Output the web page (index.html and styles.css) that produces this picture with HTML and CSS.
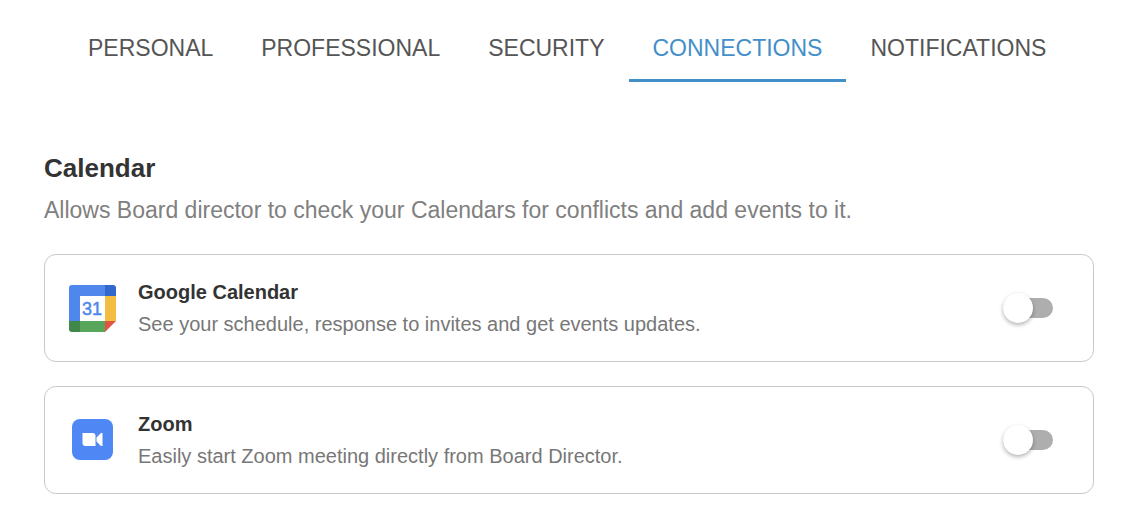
FILE: index.html
```html
<!DOCTYPE html>
<html lang="en">
<head>
<meta charset="utf-8">
<title>Connections</title>
<link rel="stylesheet" href="styles.css">
</head>
<body>
<nav class="tabs" aria-label="Profile settings">
  <a class="tab" href="#personal">PERSONAL</a>
  <a class="tab" href="#professional">PROFESSIONAL</a>
  <a class="tab" href="#security">SECURITY</a>
  <a class="tab tab-active" href="#connections" aria-current="page">CONNECTIONS</a>
  <a class="tab" href="#notifications">NOTIFICATIONS</a>
</nav>
<main class="content">
  <h1 class="heading">Calendar</h1>
  <p class="intro">Allows Board director to check your Calendars for conflicts and add events to it.</p>
  <div class="cards">
    <section class="card">
      <svg class="logo" viewBox="0 0 48 48" aria-hidden="true">
        <path fill="#4f87ed" d="M4 1h33v11H12v25H1V4a3 3 0 0 1 3-3z"/>
        <path fill="#3068cb" d="M37 1h8a3 3 0 0 1 3 3v8H37z"/>
        <path fill="#f2bd42" d="M37 12h11v25H37z"/>
        <path fill="#58a65c" d="M12 37h25v11H12z"/>
        <path fill="#3f8849" d="M1 37h11v11H4a3 3 0 0 1-3-3z"/>
        <path fill="#e15441" d="M37 37h11L37 48z"/>
        <path fill="#fff" d="M12 12h25v25H12z"/>
        <text class="logo-day" x="24" y="31" text-anchor="middle">31</text>
      </svg>
      <div class="details">
        <h2 class="name" id="google-name">Google Calendar</h2>
        <p class="description">See your schedule, response to invites and get events updates.</p>
      </div>
      <input class="switch" type="checkbox" role="switch" aria-labelledby="google-name">
    </section>
    <section class="card">
      <svg class="logo" viewBox="0 0 48 48" aria-hidden="true">
        <rect x="4" y="3" width="41" height="41" rx="8" fill="#4f88f5"/>
        <path fill="#fff" d="M14 17h10.500a3 3 0 0 1 3 3v10H17.500a3 3 0 0 1-3-3V17zM34.500 17v13h-1.500l-4.500-4.500v-4L33 17z"/>
      </svg>
      <div class="details">
        <h2 class="name" id="zoom-name">Zoom</h2>
        <p class="description">Easily start Zoom meeting directly from Board Director.</p>
      </div>
      <input class="switch" type="checkbox" role="switch" aria-labelledby="zoom-name">
    </section>
  </div>
</main>
</body>
</html>
```
FILE: styles.css
```css
* {
  box-sizing: border-box;
}

body {
  margin: 0;
  background: #fff;
  color: #333;
  font-family: "Liberation Sans", Arial, sans-serif;
}

.tabs {
  display: flex;
  padding: 14px 64px 0;
}

.tab {
  padding: 20px 24px 17px;
  border-bottom: 3px solid transparent;
  color: #555;
  font-size: 23px;
  line-height: 28px;
  text-decoration: none;
}

.tab-active {
  border-color: #438fc9;
  color: #438fc9;
}

.content {
  padding: 70px 38px 28px 44px;
}

.heading {
  margin: 0;
  font-size: 26px;
  line-height: 32px;
}

.intro {
  margin: 12px 0 0;
  color: #808080;
  font-size: 23px;
  line-height: 28px;
}

.cards {
  display: grid;
  gap: 24px;
  margin-top: 30px;
}

.card {
  display: flex;
  align-items: center;
  min-height: 108px;
  padding: 20px 40px 20px 23px;
  border: 1px solid #c8c8c8;
  border-radius: 12px;
}

.logo {
  flex: none;
  width: 48px;
  height: 48px;
}

.logo-day {
  fill: #4f87ed;
  stroke: #4f87ed;
  stroke-width: 0.5px;
  font-size: 18px;
}

.details {
  flex: 1;
  padding: 0 22px;
}

.name {
  margin: 0;
  font-size: 20px;
  line-height: 24px;
}

.description {
  margin: 8px 0 0;
  color: #777;
  font-size: 20px;
  line-height: 24px;
}

.switch {
  display: flex;
  flex: none;
  align-items: center;
  width: 50px;
  height: 20px;
  margin: 0;
  appearance: none;
  background: #aeaeae;
  border-radius: 10px;
}

.switch::before {
  flex: none;
  width: 30px;
  height: 30px;
  border-radius: 50%;
  background: #fff;
  box-shadow: 0 2px 4px rgb(0 0 0 / 30%);
  content: "";
}

.switch:checked {
  justify-content: flex-end;
}
```
